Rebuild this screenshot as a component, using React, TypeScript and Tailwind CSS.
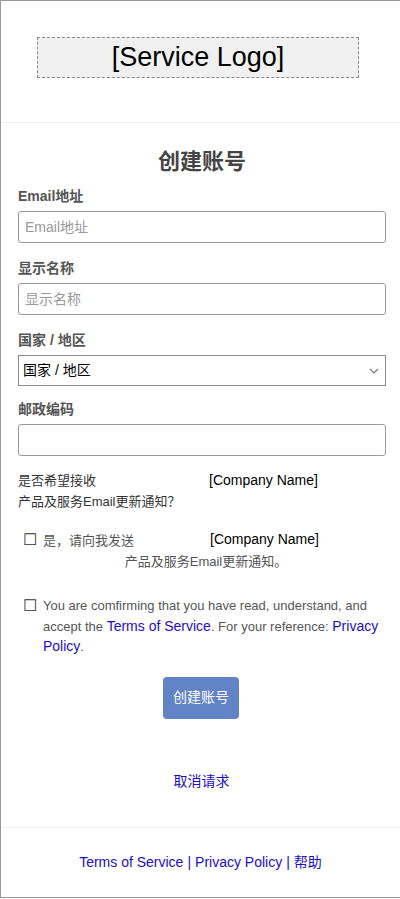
const FONT = "font-['Liberation_Sans','Noto_Sans_CJK_SC',sans-serif]"

const Field: React.FC<{ label: string; placeholder?: string }> = ({ label, placeholder }) => (
  <div className="flex flex-col">
    <label className="text-[14px] leading-[20px] font-bold text-[#555] mb-[5px]">{label}</label>
    <input
      placeholder={placeholder}
      className="h-[32px] w-full border border-[#999] rounded-[3px] px-[6px] text-[14px] text-black placeholder:text-[#999] outline-none mb-[15px]"
    />
  </div>
)

const App: React.FC = () => {
  return (
    <div className={`${FONT} w-[400px] h-[898px] border-l border-t border-b border-[#999] bg-white flex flex-col`}>
      <div className="pt-[36px] pb-[44px] border-b border-[#eee]">
        <div className="ml-[36px] w-[322px] h-[41px] border border-dashed border-[#888] bg-[#f0f0f0] flex items-center justify-center text-[27px] leading-none text-black">
          [Service Logo]
        </div>
      </div>

      <div className="pl-[17px] pr-[14px] flex flex-col">
        <h1 className="mt-[24px] text-center text-[22px] leading-[30px] font-bold text-[#444] mb-[9px]">
          创建账号
        </h1>

        <Field label="Email地址" placeholder="Email地址" />
        <Field label="显示名称" placeholder="显示名称" />

        <div className="flex flex-col">
          <label className="text-[14px] leading-[20px] font-bold text-[#555] mb-[5px]">国家 / 地区</label>
          <div className="relative h-[31px] border border-[#8a8a8a] flex items-center px-[4px] text-[14px] text-black mb-[13px]">
            国家 / 地区
            <svg className="absolute right-[6px] top-[12px]" width="10" height="6" viewBox="0 0 10 6" fill="none">
              <path d="M1 1l4 4 4-4" stroke="#777" strokeWidth="1.2" />
            </svg>
          </div>
        </div>

        <Field label="邮政编码" />

        <div className="-mt-[1px] text-[13px] leading-[21px] text-[#333]">
          <div className="flex items-baseline">
            <span className="w-[191px]">是否希望接收</span>
            <span className="text-black text-[14px]">[Company Name]</span>
          </div>
          <div>产品及服务Email更新通知？</div>
        </div>

        <div className="mt-[16px] text-[13px] leading-[21px] text-[#555]">
          <div className="flex items-center">
            <span className="ml-[5px] w-[20px] text-[#333] text-[16px]">☐</span>
            <span className="w-[167px] pt-[2px]">是，请向我发送</span>
            <span className="text-black text-[14px]">[Company Name]</span>
          </div>
          <div className="pl-[8px] text-center">产品及服务Email更新通知。</div>
        </div>

        <div className="mt-[24px] flex text-[13px] leading-[20.5px] text-[#555]">
          <span className="ml-[5px] w-[20px] shrink-0 text-[#333] text-[16px] leading-[20px]">☐</span>
          <p>
            You are comfirming that you have read, understand, and accept the{' '}
            <a href="#" className="text-[14px] leading-none text-[#1a0dcc]">Terms of Service</a>. For your reference:{' '}
            <a href="#" className="text-[14px] leading-none text-[#1a0dcc]">Privacy Policy</a>.
          </p>
        </div>

        <div className="mt-[19px] flex justify-center">
          <button className="h-[42px] px-[10px] rounded-[4px] bg-[#6283c6] text-white text-[14px] mr-[2px]">
            创建账号
          </button>
        </div>

        <div className="mt-[52px] flex justify-center">
          <a href="#" className="text-[14px] leading-[20px] text-[#1a0dcc] mr-[1px]">取消请求</a>
        </div>
      </div>

      <div className="mt-[36px] border-t border-[#eee] pt-[24px] flex justify-center text-[14px] leading-[20px] text-[#1a0dcc]">
        <a href="#">Terms of Service</a>
        <span className="px-[4px]">|</span>
        <a href="#">Privacy Policy</a>
        <span className="px-[4px]">|</span>
        <a href="#">帮助</a>
      </div>
    </div>
  )
}

export default App
